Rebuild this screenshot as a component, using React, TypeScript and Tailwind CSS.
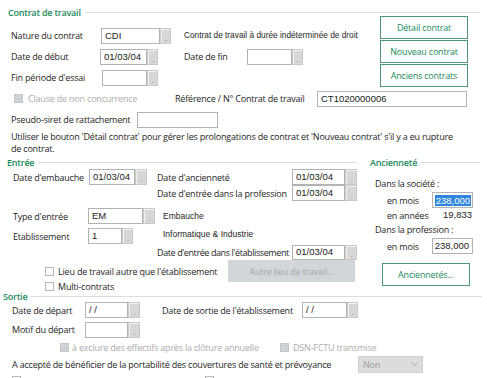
import React from "react";

const GREEN = "text-[#23895d]";

const DotBtn = ({ w = "w-[11px]" }: { w?: string }) => (
  <div className={`${w} h-full bg-[#d7d7d7] border border-[#c9c9c9] shadow-[inset_1px_1px_0_#f2f2f2] flex items-end justify-center pb-[1px]`}>
    <span className="text-[6px] leading-none text-[#9a9a9a] tracking-[-1px]">...</span>
  </div>
);

const Field = ({
  value = "",
  w,
  btn = true,
  h = "h-[16px]",
  btnW,
}: {
  value?: string;
  w: string;
  btn?: boolean;
  h?: string;
  btnW?: string;
}) => (
  <div className={`flex ${h}`}>
    <div className={`${w} h-full bg-white border border-[#b3b3b3] flex items-center px-[3px] font-['Liberation_Sans',sans-serif] text-[9.5px] tracking-normal text-[#1a1a1a]`}>
      {value}
    </div>
    {btn && <DotBtn w={btnW} />}
  </div>
);

const Check = ({ disabled = false }: { disabled?: boolean }) => (
  <div
    className={`w-[9px] h-[9px] shrink-0 border ${
      disabled ? "bg-[#cfd3d6] border-[#c3c7ca]" : "bg-white border-[#b7b7b7]"
    }`}
  />
);

const GroupHeader = ({
  label,
  className = "",
}: {
  label: string;
  className?: string;
}) => (
  <div className={`flex items-center ${className}`}>
    <span className={`font-semibold ${GREEN} text-[9px] leading-none`}>{label}</span>
    <div className="flex-1 h-px bg-[#dcdcdc] ml-[4px]" />
  </div>
);

const GreenBtn = ({ label, className = "" }: { label: string; className?: string }) => (
  <div
    className={`border border-[#4b967a] bg-white flex items-center justify-center ${GREEN} text-[9px] ${className}`}
  >
    {label}
  </div>
);

export default function App() {
  return (
    <div className="w-[487px] h-[378px] overflow-hidden bg-white text-[#1e1e1e] font-['Open_Sans',sans-serif] text-[9px] tracking-[-0.2px] leading-none whitespace-nowrap select-none">
      {/* Contrat de travail */}
      <GroupHeader label="Contrat de travail" className="h-[16px] pt-[8px] pl-[8px] pr-[7px]" />

      <div className="flex">
        <div className="w-[380px] pt-[9px]">
          <div className="flex items-center h-[21px]">
            <span className="ml-[11px] w-[90px]">Nature du contrat</span>
            <Field value="CDI" w="w-[59px]" />
            <span className="ml-[13px] font-['Liberation_Sans',sans-serif] text-[8.3px] tracking-normal">
              Contrat de travail à durée indéterminée de droit
            </span>
          </div>
          <div className="flex items-center h-[21px]">
            <span className="ml-[11px] w-[89px]">Date de début</span>
            <Field value="01/03/04" w="w-[47px]" />
            <span className="ml-[26px] w-[63px]">Date de fin</span>
            <Field w="w-[45px]" />
          </div>
          <div className="flex items-center h-[21px]">
            <span className="ml-[11px] w-[91px]">Fin période d'essai</span>
            <Field w="w-[45px]" />
          </div>
        </div>
        <div className="w-[88px] flex flex-col gap-[1px]">
          <GreenBtn label="Détail contrat" className="h-[23px]" />
          <GreenBtn label="Nouveau contrat" className="h-[23px]" />
          <GreenBtn label="Anciens contrats" className="h-[23px]" />
        </div>
      </div>

      <div className="flex items-center h-[21px]">
        <div className="ml-[14px] w-[161px] flex items-center gap-[5px]">
          <Check disabled />
          <span className="text-[#ababab]">Clause de non concurrence</span>
        </div>
        <span className="w-[142px]">Référence / N° Contrat de travail</span>
        <Field value="CT1020000006" w="w-[150px]" btn={false} />
      </div>
      <div className="flex items-center h-[21px]">
        <span className="ml-[11px] w-[126px]">Pseudo-siret de rattachement</span>
        <Field w="w-[81px]" btn={false} />
      </div>
      <div className="px-[11px] pt-[1px] h-[25px]">
        <div className="h-[12px] leading-[12px]">
          Utiliser le bouton 'Détail contrat' pour gérer les prolongations de contrat et 'Nouveau contrat' s'il y a eu rupture
        </div>
        <div className="h-[12px] leading-[12px]">de contrat.</div>
      </div>

      {/* Entrée + Ancienneté */}
      <div className="flex">
        <div className="w-[360px]">
          <GroupHeader label="Entrée" className="h-[14px] pl-[7px] pr-[3px]" />
          <div className="flex items-center h-[16px]">
            <span className="ml-[13px] w-[76px]">Date d'embauche</span>
            <Field value="01/03/04" w="w-[46px]" btnW="w-[12px]" />
            <span className="ml-[10px] w-[135px]">Date d'ancienneté</span>
            <Field value="01/03/04" w="w-[53px]" btnW="w-[12px]" />
          </div>
          <div className="flex items-center h-[16px]">
            <span className="ml-[157px] w-[135px]">Date d'entrée dans la profession</span>
            <Field value="01/03/04" w="w-[53px]" btnW="w-[12px]" />
          </div>
          <div className="flex items-center h-[16px] mt-[7px]">
            <span className="ml-[13px] w-[75px]">Type d'entrée</span>
            <Field value="EM" w="w-[55px]" btnW="w-[12px]" />
            <span className="ml-[8px] font-['Liberation_Sans',sans-serif] text-[8.5px] tracking-normal">Embauche</span>
          </div>
          <div className="flex items-center h-[16px] mt-[4px]">
            <span className="ml-[13px] w-[75px]">Etablissement</span>
            <Field value="1" w="w-[34px]" />
            <span className="ml-[30px] font-['Liberation_Sans',sans-serif] text-[8.5px] tracking-normal -mt-[3px]">
              Informatique &amp; Industrie
            </span>
          </div>
          <div className="flex items-center h-[16px]">
            <span className="ml-[157px] w-[135px] tracking-[-0.4px]">Date d'entrée dans l'établissement</span>
            <Field value="01/03/04" w="w-[53px]" btnW="w-[12px]" h="h-[15px]" />
          </div>
          <div className="flex items-center h-[22px]">
            <div className="ml-[45px] w-[183px] flex items-center gap-[4px]">
              <Check />
              <span>Lieu de travail autre que l'établissement</span>
            </div>
            <div className="w-[127px] h-[22px] bg-[#d3d6d9] flex items-center justify-center text-[#a3a6a9]">
              Autre lieu de travail...
            </div>
          </div>
          <div className="flex items-center h-[8px] gap-[4px] ml-[45px]">
            <Check />
            <span>Multi-contrats</span>
          </div>
        </div>

        <div className="w-[127px]">
          <GroupHeader label="Ancienneté" className="h-[14px] pl-[10px] pr-[7px]" />
          <div className="h-[14px] mt-[7px] pl-[15px] flex items-center">Dans la société :</div>
          <div className="flex items-center h-[16px] mt-[2px] pl-[27px]">
            <span className="w-[45px]">en mois</span>
            <div className="w-[41px] h-[16px] border border-[#b3b3b3] flex items-center justify-end pr-[1px]">
              <span className="bg-[#2f86de] text-white font-['Liberation_Sans',sans-serif] text-[9.5px] tracking-normal leading-[11px] px-[1px]">
                238,000
              </span>
            </div>
          </div>
          <div className="flex items-center h-[14px] pl-[27px]">
            <span className="w-[45px]">en années</span>
            <span className="w-[41px] text-right pr-[1px] font-['Liberation_Sans',sans-serif] text-[9.5px] tracking-normal">19,833</span>
          </div>
          <div className="h-[14px] pl-[15px] flex items-center">Dans la profession :</div>
          <div className="flex items-center h-[16px] mt-[2px] pl-[27px]">
            <span className="w-[45px]">en mois</span>
            <div className="w-[41px] h-[16px] border border-[#b3b3b3] flex items-center justify-end pr-[3px] font-['Liberation_Sans',sans-serif] text-[9.5px] tracking-normal">
              238,000
            </div>
          </div>
          <GreenBtn label="Anciennetés..." className="h-[23px] w-[88px] mt-[9px] ml-[22px]" />
        </div>
      </div>

      {/* Sortie */}
      <GroupHeader label="Sortie" className="h-[12px] pl-[3px] pr-[5px]" />
      <div className="flex items-center h-[16px]">
        <span className="ml-[12px] w-[73px]">Date de départ</span>
        <Field value=" / /" w="w-[43px]" btnW="w-[12px]" />
        <span className="ml-[22px] w-[140px]">Date de sortie de l'établissement</span>
        <Field value=" / /" w="w-[45px]" />
      </div>
      <div className="flex items-center h-[17px] mt-[3px]">
        <span className="ml-[12px] w-[73px]">Motif du départ</span>
        <Field w="w-[43px]" btnW="w-[12px]" />
      </div>
      <div className="flex items-center h-[16px] mt-[1px]">
        <div className="ml-[60px] w-[220px] flex items-center gap-[3px]">
          <Check disabled />
          <span className="text-[#ababab]">à exclure des effectifs après la clôture annuelle</span>
        </div>
        <div className="flex items-center gap-[4px]">
          <Check disabled />
          <span className="text-[#ababab]">DSN-FCTU transmise</span>
        </div>
      </div>
      <div className="flex items-center h-[18px]">
        <span className="ml-[12px] w-[346px]">A accepté de bénéficier de la portabilité des couvertures de santé et prévoyance</span>
        <div className="w-[65px] h-[17px] bg-[#dcdcdc] border border-[#d0d0d0] flex items-center justify-between px-[4px] text-[#9d9d9d]">
          <span>Non</span>
          <svg width="7" height="4" viewBox="0 0 7 4">
            <path d="M0.5 0.5 L3.5 3.5 L6.5 0.5" stroke="#a9a9a9" fill="none" strokeWidth="1" />
          </svg>
        </div>
      </div>
      <div className="flex pt-[3px]">
        <div className="ml-[12px]"><Check /></div>
        <div className="ml-[184px]"><Check /></div>
      </div>
    </div>
  );
}
